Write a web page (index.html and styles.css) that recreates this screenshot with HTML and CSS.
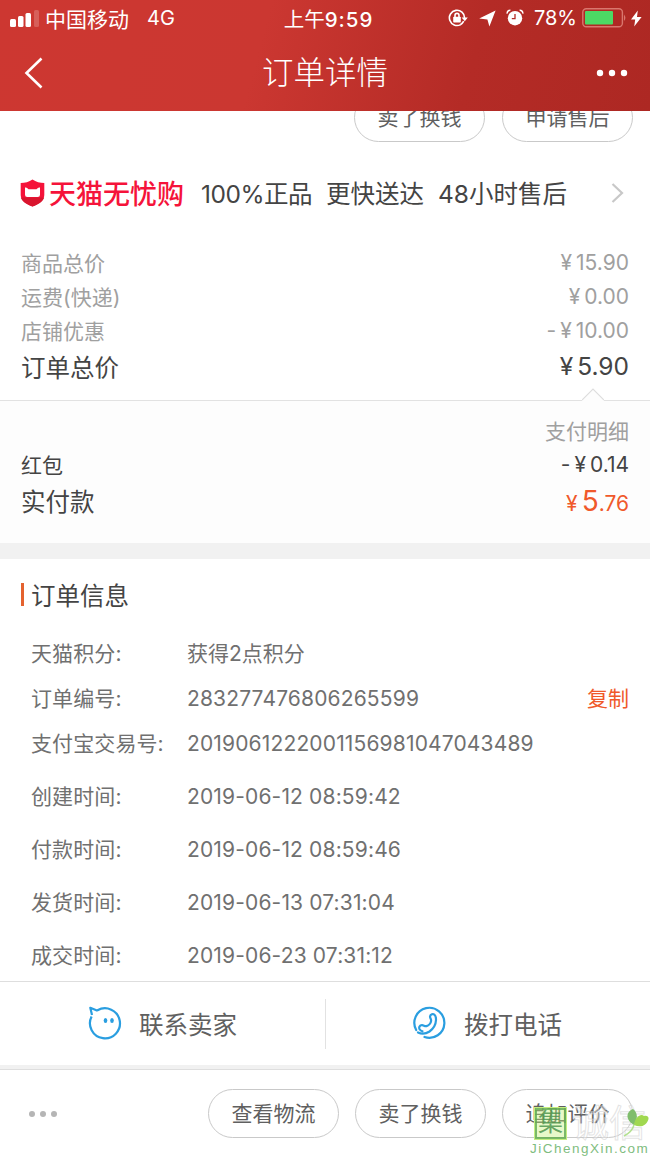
FILE: index.html
```html
<!DOCTYPE html>
<html lang="zh-CN">
<head>
    <meta charset="UTF-8">
    <meta name="viewport" content="width=device-width, initial-scale=1.0">
    <title>订单详情</title>
    <link rel="stylesheet" href="styles.css">
</head>
<body>
    <header class="header">
        <div class="status-bar">
            <div class="status-left">
                <svg class="signal" width="29" height="18" viewBox="0 0 29 18" fill="#fff">
                    <rect x="0" y="10" width="6" height="8" rx="1.5"/>
                    <rect x="8" y="7" width="5.5" height="11" rx="1.5"/>
                    <rect x="15.5" y="4" width="5.5" height="14" rx="1.5"/>
                    <rect x="24" y="1" width="5" height="17" rx="1.5" opacity=".2"/>
                </svg>
                <span class="carrier">中国移动</span>
                <span class="network">4G</span>
            </div>
            <div class="clock">上午<b>9:59</b></div>
            <div class="status-right">
                <!-- rotation lock -->
                <svg class="lock" width="20" height="18" viewBox="0 0 20 18" fill="none" stroke="#fff" stroke-width="1.6">
                    <path d="M12.6 15.6A7.6 7.6 0 1 1 16.6 9"/>
                    <path d="M13.6 8.5h6.2L16.8 12.2z" fill="#fff" stroke="none"/>
                    <path d="M15.7 12.2a7.6 7.6 0 0 1-3.4 3.5"/>
                    <rect x="5.2" y="7.8" width="7.6" height="5.8" rx=".8" fill="#fff" stroke="none"/>
                    <path d="M7 8V6.4a2 2 0 0 1 4 0V8"/>
                </svg>
                <!-- location -->
                <svg class="arrow" width="17" height="17" viewBox="0 0 17 17" fill="#fff">
                    <path d="M16.6.4 10.4 16.6 8.4 9.6.2 8.5z"/>
                </svg>
                <!-- alarm -->
                <svg class="alarm" width="18" height="18" viewBox="0 0 18 18">
                    <circle cx="9" cy="9.2" r="7.2" fill="#fff"/>
                    <path d="M1.2 4.6A3 3 0 0 1 4.4 1.2M13.6 1.2a3 3 0 0 1 3.2 3.4" fill="none" stroke="#fff" stroke-width="1.5"/>
                    <path d="M9 5v4.6H5.8" fill="none" stroke="#b42a25" stroke-width="1.3"/>
                </svg>
                <span class="percent">78%</span>
                <svg class="battery" width="45" height="20" viewBox="0 0 45 20">
                    <rect x=".8" y=".8" width="39.6" height="18" rx="3.5" fill="none" stroke="#d9776e" stroke-width="1.4"/>
                    <rect x="3" y="3" width="28" height="13.6" rx="1" fill="#4cd964"/>
                    <path d="M42 6.5q2.8 3.3 0 6.6z" fill="#d9776e"/>
                </svg>
                <svg class="bolt" width="11" height="17" viewBox="0 0 11 17" fill="#fff">
                    <path d="M6.8.5 0 9.4h4.2L3.2 16.5 10.6 7H6z"/>
                </svg>
            </div>
        </div>
        <nav class="nav">
            <svg width="20" height="34" viewBox="0 0 20 34" fill="none" stroke="#fff" stroke-width="2.6">
                <path d="M17.5 2.5 2.5 17l15 14.5"/>
            </svg>
            <h1>订单详情</h1>
            <svg width="32" height="8" viewBox="0 0 32 8" fill="#fff">
                <circle cx="4" cy="4" r="3.2"/><circle cx="16" cy="4" r="3.2"/><circle cx="28" cy="4" r="3.2"/>
            </svg>
        </nav>
    </header>

    <main>
        <div class="goods-actions">
            <a class="pill">卖了换钱</a>
            <a class="pill">申请售后</a>
        </div>

        <div class="guarantee">
            <svg width="25" height="28" viewBox="0 0 25 28">
                <path d="M12.5.5C16 3 20 4 24.3 4v12c0 5-5 9-11.8 11.5C5.7 25 .7 21 .7 16V4C5 4 9 3 12.5.5z" fill="#f5133a"/>
                <path d="M.9 18.5h23.2c-1 4-5.5 6.8-11.6 9C6.4 25.3 1.9 22.5.9 18.5z" fill="#d9152e"/>
                <path d="M5 8.5c1.5 0 2.6.6 3.5 1.8h8c.9-1.2 2-1.8 3.5-1.8v7.2q0 2.3-2.3 2.3H7.3Q5 18 5 15.7z" fill="#fff"/>
            </svg>
            <strong>天猫无忧购</strong>
            <span class="g1">100%正品</span>
            <span class="g2">更快送达</span>
            <span class="g3">48小时售后</span>
            <svg class="more" width="13" height="22" viewBox="0 0 13 22" fill="none" stroke="#c8c8c8" stroke-width="2.2">
                <path d="M1.5 2 11 11l-9.500 9"/>
            </svg>
        </div>

        <section class="prices">
            <div class="row"><span>商品总价</span><span class="num"><i>¥</i>15.90</span></div>
            <div class="row"><span>运费(快递)</span><span class="num"><i>¥</i>0.00</span></div>
            <div class="row"><span>店铺优惠</span><span class="num"><i>-</i><i>¥</i>10.00</span></div>
            <div class="row total"><span>订单总价</span><span class="num"><i>¥</i>5.90</span></div>
        </section>

        <section class="payment">
            <svg class="notch" width="22" height="13" viewBox="0 0 22 13">
                <path d="M0 12 11 1l11 11v1H0z" fill="#fdfdfd"/>
                <path d="M0 12 11 1l11 11" fill="none" stroke="#dedede" stroke-width="1.2"/>
            </svg>
            <div class="row detail"><span></span><span>支付明细</span></div>
            <div class="row bonus"><span>红包</span><span class="num"><i>-</i><i>¥</i>0.14</span></div>
            <div class="row paid"><span>实付款</span><span class="num"><i>¥</i><b>5</b>.76</span></div>
        </section>

        <section class="info">
            <h2>订单信息</h2>
            <dl>
                <div><dt>天猫积分:</dt><dd class="points">获得2点积分</dd></div>
                <div><dt>订单编号:</dt><dd>283277476806265599</dd><a class="copy">复制</a></div>
                <div><dt>支付宝交易号:</dt><dd>2019061222001156981047043489</dd></div>
                <div class="time"><dt>创建时间:</dt><dd>2019-06-12 08:59:42</dd></div>
                <div class="time"><dt>付款时间:</dt><dd>2019-06-12 08:59:46</dd></div>
                <div class="time"><dt>发货时间:</dt><dd>2019-06-13 07:31:04</dd></div>
                <div class="time"><dt>成交时间:</dt><dd>2019-06-23 07:31:12</dd></div>
            </dl>
        </section>

        <section class="contact">
            <a>
                <svg width="34" height="34" viewBox="0 0 34 34" fill="none" stroke="#2a9ee0" stroke-width="2.2">
                    <path d="M4 9 2.3 1.8 8.3 4.3q.5.3 1.2 0A15 15 0 1 1 3.6 10.5" stroke-linejoin="round"/>
                    <ellipse cx="17.500" cy="14.500" rx="1.800" ry="2.500" fill="#2a9ee0" stroke="none"/>
                    <ellipse cx="24" cy="14.500" rx="1.800" ry="2.500" fill="#2a9ee0" stroke="none"/>
                </svg>
                <span>联系卖家</span>
            </a>
            <a>
                <svg width="34" height="34" viewBox="0 0 34 34" fill="none" stroke="#2a9ee0" stroke-width="2.200" stroke-linecap="round" stroke-linejoin="round">
                    <path d="M3.200 24A15 15 0 1 1 11.500 31"/>
                    <path d="M5 26.500c3.500 1.700 8 1.300 11.500-1 3.500-2.500 6.300-6.500 6.500-11.500.1-2.300-.2-4-1.500-5.200-1.600-1.500-4-.6-4.400 1.400-.4 1.900 1.200 2.600 1 4.600-.2 2-2.300 4.600-4.600 5.300-2 .5-3-1.300-4.900-.9-2.200.4-2.900 2.400-2 4 .6 1 1.600 1.700 2.800 2"/>
                </svg>
                <span>拨打电话</span>
            </a>
        </section>
    </main>

    <footer class="footer">
        <svg class="dots" width="30" height="8" viewBox="0 0 30 8" fill="#b5b5b5">
            <circle cx="4" cy="4" r="3"/><circle cx="15" cy="4" r="3"/><circle cx="26" cy="4" r="3"/>
        </svg>
        <a class="pill">查看物流</a>
        <a class="pill">卖了换钱</a>
        <a class="pill">追加评价</a>
        <div class="watermark">
            <div class="wm-name"><span class="wm-seal">集</span><span class="wm-text">诚信</span></div>
            <div class="wm-url">JiChengXin.com</div>
            <svg class="leaf" width="28" height="32" viewBox="0 0 28 32">
                <path d="M12 18C2 12 5 4 11 2c5 4 5 10 1 16z" fill="#7fbd6c"/>
                <path d="M12 18c1-8 7-12 10-9 3-1 5 1 4.500 3-2 7-8 9-14.500 6z" fill="#a0d850"/>
                <path d="M12 18q-2 7-10 11" fill="none" stroke="#b4e090" stroke-width="1.500"/>
            </svg>
        </div>
    </footer>
</body>
</html>
```
FILE: styles.css
```css
* {
    box-sizing: border-box;
}
body {
    margin: 0;
    width: 650px;
    height: 1156px;
    overflow: hidden;
    background: #fff;
    color: #444;
    font-family: Inter, "Noto Sans CJK SC", sans-serif;
    font-size: 21px;
    font-weight: 400;
}
h1, h2, dl, dd {
    margin: 0;
    font-weight: inherit;
}
i {
    font-style: normal;
    margin-right: 4px;
}
svg {
    display: block;
    flex: none;
}

/* header */
.header {
    height: 111px;
    color: #fff;
    background: linear-gradient(105deg, #cd3731 0%, #cb3731 40%, #b42b26 72%, #ad2823 100%);
}
.status-bar {
    display: grid;
    grid-template-columns: 1fr auto 1fr;
    align-items: center;
    height: 36px;
    padding: 0 8px 0 10px;
}
.status-left, .status-right {
    display: flex;
    align-items: center;
}
.status-left span, .clock {
    padding-bottom: 1px;
}
.status-right {
    justify-content: flex-end;
}
.carrier {
    margin-left: 6px;
    font-size: 21px;
}
.network {
    margin-left: 18px;
    font-size: 20px;
}
.clock {
    padding-left: 5px;
    font-size: 20.5px;
}
.clock b {
    font-weight: 500;
    letter-spacing: 1px;
}
.arrow {
    margin-left: 11px;
}
.alarm {
    margin: 0 10px 0 10px;
}
.percent {
    font-size: 20px;
}
.battery {
    margin-left: 5px;
}
.bolt {
    margin-left: 4px;
}
.nav {
    display: flex;
    align-items: center;
    height: 74px;
    padding: 0 22px 0 24px;
}
.nav h1 {
    flex: 1;
    padding-left: 10px;
    font-size: 31.5px;
    font-weight: 300;
    line-height: 38px;
    text-align: center;
}

/* buttons of the product above */
.goods-actions {
    display: flex;
    justify-content: flex-end;
    align-items: flex-end;
    gap: 17px;
    height: 31px;
    padding-right: 17px;
    overflow: hidden;
}
.pill {
    flex: none;
    width: 131px;
    height: 49px;
    border: 1px solid #c9c9c9;
    border-radius: 25px;
    color: #606060;
    font-size: 21px;
    line-height: 48px;
    text-align: center;
}

.guarantee {
    display: flex;
    align-items: center;
    height: 102px;
    padding: 0 26px 0 20px;
    font-size: 24.5px;
    white-space: nowrap;
}
.guarantee span, .guarantee strong {
    padding-bottom: 2px;
}
.guarantee strong {
    width: 136px;
    margin-left: 4px;
    color: #f5133a;
    font-size: 27px;
    font-weight: 500;
}
.g1 {
    margin-left: 16px;
    letter-spacing: -.5px;
}
.g2, .g3 {
    margin-left: 14px;
}
.more {
    margin-left: auto;
}

/* amounts */
.row {
    display: flex;
    justify-content: space-between;
    align-items: center;
    height: 34px;
    padding: 0 21px;
}
.num {
    font-size: 21px;
}
.prices {
    height: 156px;
    padding-top: 1px;
    color: #a0a0a0;
}
.prices .total {
    height: 38px;
    color: #444;
    font-size: 24.5px;
}
.total .num {
    font-size: 24.5px;
}
.payment {
    position: relative;
    height: 143px;
    padding-top: 12px;
    background: #fdfdfd;
    border-top: 1px solid #e2e2e2;
}
.notch {
    position: absolute;
    top: -13px;
    right: 46px;
}
.detail {
    color: #a0a0a0;
}
.paid {
    height: 39px;
    font-size: 24.5px;
}
.paid .num {
    color: #f0592b;
}
.paid b {
    font-size: 28px;
    font-weight: 400;
}

/* order information */
.info {
    height: 438px;
    padding: 22px 21px 0;
    border-top: 16px solid #f1f1f1;
    color: #707070;
}
.info h2 {
    display: flex;
    align-items: center;
    height: 26px;
    color: #444;
    font-size: 24.5px;
}
.info h2::before {
    content: "";
    width: 3px;
    height: 23px;
    margin-right: 7px;
    background: #e4622f;
}
.info dl {
    margin-top: 22px;
    padding-left: 10px;
}
.info dl div {
    display: flex;
    align-items: center;
    height: 45px;
}
.info dl .time {
    height: 53px;
    padding-top: 8px;
}
.info dt {
    width: 156px;
    letter-spacing: .1px;
}
.info dd {
    padding-top: 3px;
    letter-spacing: .15px;
}
.info .points {
    padding-top: 0;
    letter-spacing: 0;
}
.copy {
    margin-left: auto;
    color: #f0592b;
}

.contact {
    display: flex;
    align-items: center;
    height: 84px;
    border-top: 1px solid #dedede;
    color: #606060;
    font-size: 24.5px;
}
.contact a {
    display: flex;
    align-items: center;
    gap: 17px;
    width: 325px;
    height: 50px;
    padding-left: 88px;
}
.contact a + a {
    padding-left: 87px;
    border-left: 1px solid #e2e2e2;
}
.contact svg {
    margin-bottom: 2px;
}
.contact span {
    padding-bottom: 1px;
}

.footer {
    position: relative;
    display: flex;
    align-items: center;
    gap: 16px;
    height: 91px;
    padding: 2px 17px 0 28px;
    border-top: 4px solid #f1f1f1;
    box-shadow: inset 0 1px #dedede;
}
.dots {
    margin-right: auto;
}

/* site mark over the last button */
.watermark {
    position: absolute;
    right: 0;
    bottom: 0;
    width: 120px;
    height: 49px;
}
.wm-name {
    display: flex;
    align-items: center;
    gap: 6px;
    height: 33px;
    padding-left: 5px;
}
.wm-seal {
    width: 31px;
    height: 31px;
    border: 2px solid rgba(95, 170, 80, .8);
    outline: 1px solid #c4ee80;
    background: rgba(196, 240, 120, .4);
    color: rgba(80, 150, 80, .85);
    font-size: 25px;
    line-height: 25px;
    text-align: center;
}
.wm-text {
    color: rgba(255, 255, 255, .35);
    font-size: 37px;
    font-weight: 400;
    line-height: 33px;
    -webkit-text-stroke: 1px rgba(200, 200, 200, .5);
}
.wm-url {
    color: #7fbd80;
    font-family: "Liberation Sans", sans-serif;
    font-size: 13.5px;
    line-height: 18px;
    letter-spacing: 1.5px;
}
.leaf {
    position: absolute;
    top: 0;
    right: 0;
}
```
